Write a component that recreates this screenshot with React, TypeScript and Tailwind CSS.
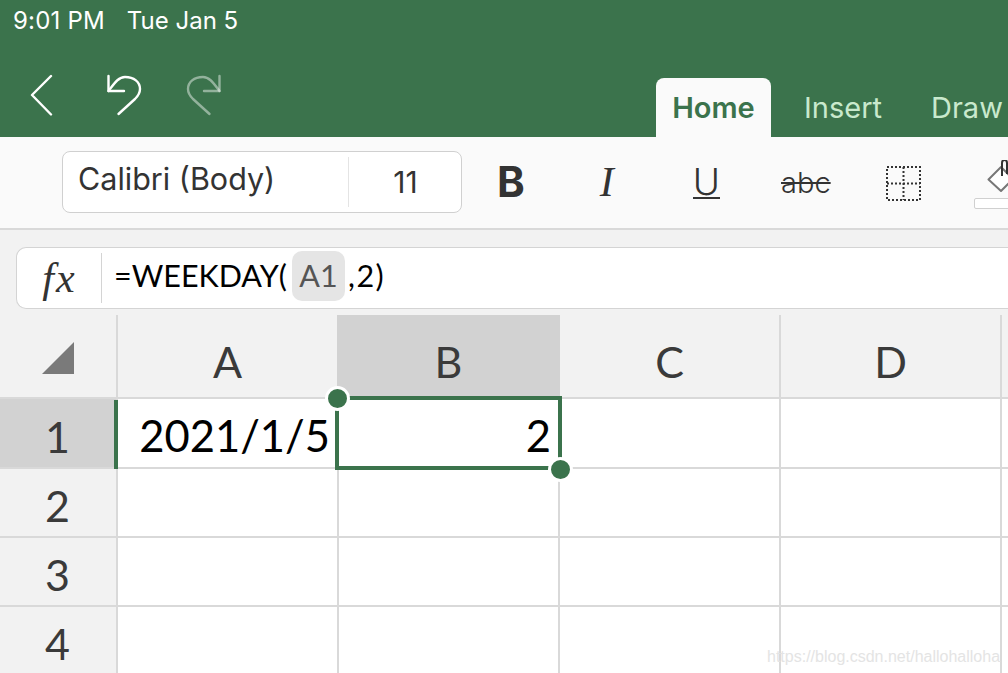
const sans = "font-['Inter','Liberation_Sans',sans-serif]";
const cal = "font-['Lato','Noto_Sans',sans-serif]";

function Back() {
  return (
    <svg width="24" height="42" viewBox="0 0 24 42" fill="none" stroke="#fff" strokeWidth="2.4" strokeLinecap="round" strokeLinejoin="round">
      <path d="M21 2 L2 21 L21 40.5" />
    </svg>
  );
}
function Undo({ flip = false, op = 1 }: { flip?: boolean; op?: number }) {
  return (
    <svg width="36" height="42" viewBox="0 0 36 42" fill="none" stroke="#fff" strokeOpacity={op} strokeWidth="2.4" strokeLinecap="round" strokeLinejoin="round" className={flip ? "-scale-x-100" : ""}>
      <path d="M2.5 2 V17 H18" />
      <path d="M2.5 17 C8 10 12 3 19 3 C28 3 34 8 34 15 C34 19 32 22 29 25 L12.5 40" />
    </svg>
  );
}
function Borders() {
  return (
    <svg width="36" height="36" viewBox="0 0 36 36" fill="none" stroke="#333" strokeWidth="2" strokeDasharray="2 2">
      <rect x="1" y="1" width="33" height="33" />
      <path d="M17.5 1 V34 M1 17.5 H34" />
    </svg>
  );
}
function Bucket() {
  return (
    <svg width="36" height="36" viewBox="0 0 36 36" fill="none" className="shrink-0">
      <path d="M1.5 19.5 L14 7 L26 19 L14 31 Z" fill="#fff" stroke="#777" strokeWidth="2" strokeLinejoin="round" />
      <path d="M15 16 V3 C15 -1 20 -1 20 3 V14" stroke="#333" strokeWidth="2" />
    </svg>
  );
}

const line = "border-[#d9d9d9]";

function Head({ children, on = false, w, edge = true }: { children: string; on?: boolean; w: string; edge?: boolean }) {
  return (
    <div className={`${w} shrink-0 h-full flex items-center justify-center pt-[12px] text-[43px] text-[#3a3a3a] ${cal} ${edge ? `border-r-2 ${line}` : ""} ${on ? "bg-[#d2d2d2]" : ""}`}>
      {children}
    </div>
  );
}

function Row({ n, h, on = false, a = "", b = "" }: { n: string; h: string; on?: boolean; a?: string; b?: string }) {
  return (
    <div className={`flex ${h}`}>
      <div className={`w-[118px] shrink-0 flex items-center justify-center pr-[1px] pt-[6px] text-[43px] leading-none text-[#3a3a3a] ${cal} border-r-2 border-b-2 ${line} ${on ? "bg-[#d2d2d2]" : "bg-[#f2f2f2]"}`}>{n}</div>
      <div className={`w-[221px] shrink-0 flex items-center justify-end pr-[7px] pt-[6px] text-[43.5px] leading-none text-black ${cal} border-r-2 border-b-2 ${line}`}>{a}</div>
      <div className={`w-[221px] shrink-0 flex items-center justify-end pr-[7px] pt-[6px] text-[43.5px] leading-none text-black ${cal} border-r-2 border-b-2 ${line}`}>{b}</div>
      <div className={`w-[221px] shrink-0 border-r-2 border-b-2 ${line}`} />
      <div className={`w-[221px] shrink-0 border-r-2 border-b-2 ${line}`} />
      <div className={`flex-1 border-b-2 ${line}`} />
    </div>
  );
}

export default function App() {
  return (
    <div className={`relative w-[1008px] h-[673px] overflow-hidden bg-white ${sans}`}>
      <div className="h-[137px] bg-[#3b734c] flex flex-col">
        <div className="h-[42px] flex items-center pl-[13px] gap-[22px] text-[24px] text-white whitespace-nowrap">
          <span className="tracking-[0.2px]">9:01 PM</span>
          <span>Tue Jan 5</span>
        </div>
        <div className="flex-1 flex items-end">
          <div className="flex items-start pl-[30px] pb-[21px] w-[656px]">
            <Back />
            <div className="ml-[52px]"><Undo /></div>
            <div className="ml-[44px]"><Undo flip op={0.45} /></div>
          </div>
          <div className="w-[115px] h-[59px] bg-[#fafafa] rounded-t-[8px] flex items-center justify-center text-[29px] font-semibold text-[#3b734c]">Home</div>
          <div className="ml-[33px] h-[59px] flex items-center text-[29px] text-[#c9e9cd]">Insert</div>
          <div className="ml-[49px] h-[59px] flex items-center text-[29px] text-[#c9e9cd]">Draw</div>
        </div>
      </div>

      <div className={`h-[93px] bg-[#fafafa] border-b-2 ${line} flex items-center pl-[62px] pb-[1px] whitespace-nowrap`}>
        <div className="w-[400px] h-[62px] shrink-0 bg-white border border-[#d0d0d0] rounded-[8px] flex items-center">
          <div className="w-[286px] h-[50px] flex items-center pl-[15px] pb-[6px] text-[30.5px] text-[#333] border-r border-[#e4e4e4]">Calibri (Body)</div>
          <div className="flex-1 text-center pl-[1px] text-[30px] text-[#333]">11</div>
        </div>
        <span className="ml-[35px] w-[30px] text-[42px] leading-none font-bold text-[#333]">B</span>
        <span className="ml-[75px] w-[22px] text-[42px] leading-none text-[#333] font-['Liberation_Serif',serif] italic">I</span>
        <span className="ml-[79px] w-[28px] text-[37px] leading-[31px] font-light text-[#333] border-b-2 border-[#333] flex justify-center">U</span>
        <span className="ml-[61px] text-[29px] leading-none text-[#333] font-light line-through">abc</span>
        <div className="ml-[55px] shrink-0 mt-[4px]"><Borders /></div>
        <div className="ml-[65px] shrink-0 relative mb-[8px]">
          <Bucket />
          <div className="absolute left-[-13px] top-[38px] w-[60px] h-[11px] border border-[#d0d0d0] bg-white rounded-[2px]" />
        </div>
      </div>

      <div className="h-[85px] bg-[#f2f2f2] pt-[17px] pl-[16px]">
        <div className="h-[62px] bg-white border border-[#d4d4d4] border-r-0 rounded-l-[10px] flex items-center">
          <div className="w-[85px] h-[50px] shrink-0 flex items-center justify-center pl-[1px] text-[42px] tracking-[2px] italic text-[#333] font-['Liberation_Serif',serif] border-r border-[#d4d4d4]">fx</div>
          <div className={`flex items-center mb-[4px] pl-[12px] text-[30.5px] text-black ${cal} whitespace-nowrap`}>
            <span>=WEEKDAY(</span>
            <span className="ml-[5px] w-[53px] h-[50px] flex items-center justify-center rounded-[10px] bg-[#e5e5e5] text-[#555]">A1</span>
            <span className="ml-[3px] tracking-[1.5px]">,2)</span>
          </div>
        </div>
      </div>

      <div className={`h-[84px] flex bg-[#f2f2f2] border-b-2 ${line}`}>
        <div className={`w-[118px] shrink-0 border-r-2 ${line} flex items-center justify-center pt-[4px]`}>
          <svg width="32" height="32" viewBox="0 0 32 32"><path d="M32 0 V32 H0 Z" fill="#7a7a7a" /></svg>
        </div>
        <Head w="w-[219px]" edge={false}>A</Head>
        <Head w="w-[223px]" on edge={false}>B</Head>
        <Head w="w-[221px]">C</Head>
        <Head w="w-[221px]">D</Head>
      </div>

      <Row n="1" h="h-[70px]" on a="2021/1/5" b="2" />
      <Row n="2" h="h-[69px]" />
      <Row n="3" h="h-[69px]" />
      <Row n="4" h="h-[69px]" />

      {/* selection overlay */}
      <div className="absolute left-[335px] top-[396px] w-[227px] h-[74px] border-[4px] border-[#3b734c]" />
      <div className="absolute left-[114px] top-[400px] w-[4px] h-[69px] bg-[#3b734c]" />
      <div className="absolute left-[325px] top-[386px] w-[25px] h-[25px] rounded-full bg-[#3b734c] border-[3px] border-white" />
      <div className="absolute left-[548px] top-[457px] w-[25px] h-[25px] rounded-full bg-[#3b734c] border-[3px] border-white" />

      <div className="absolute left-[767px] top-[645px] text-[16px] text-[#e4e4e4] font-['Liberation_Sans',sans-serif] whitespace-nowrap">https://blog.csdn.net/hallohalloha</div>
    </div>
  );
}
